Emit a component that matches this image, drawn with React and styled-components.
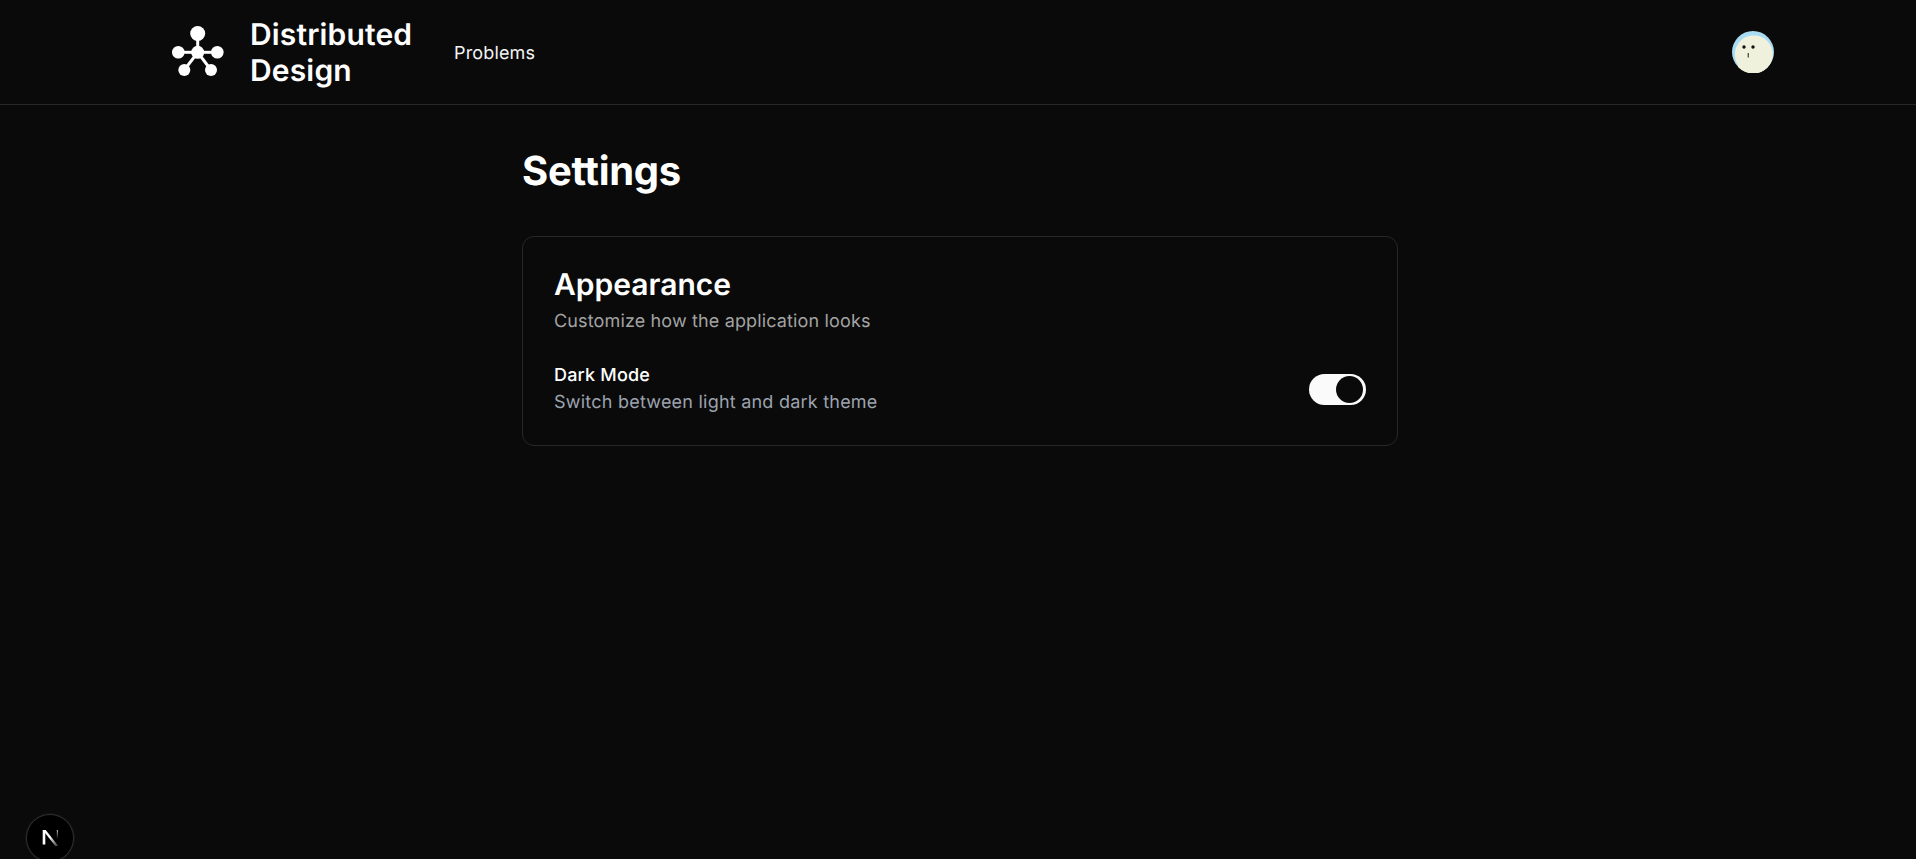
import React from "react";
import styled, { createGlobalStyle } from "styled-components";

const Global = createGlobalStyle`
  html, body { margin: 0; padding: 0; background: #0a0a0a; }
  body { font-family: Inter, "Liberation Sans", sans-serif; text-rendering: geometricPrecision; -webkit-font-smoothing: antialiased; color: #fff; min-height: 859px; overflow: hidden; }
`;
const Page = styled.div`position: relative; height: 859px; background: #0a0a0a;`;
const Header = styled.header`
  height: 104px; border-bottom: 1px solid #27272a; display: flex; align-items: center;
  justify-content: space-between; padding: 0 142px 0 172px;
`;
const Left = styled.div`display: flex; align-items: center;`;
const Brand = styled.a`display: flex; align-items: center; gap: 26px; color: #fff;`;
const BrandName = styled.span`padding-top: 1px; font-size: 30px; line-height: 36px; font-weight: 600; letter-spacing: 0.16px; width: 170px;`;
const NavLink = styled.a`margin-left: 34px; padding-top: 4px; font-size: 18px; line-height: 28px; letter-spacing: 0.15px; color: #f4f4f5;`;
const Main = styled.main`width: 876px; margin-left: 522px; padding-top: 42px;`;
const Title = styled.h1`margin: 0 0 41px; font-size: 40px; line-height: 48px; font-weight: 700; letter-spacing: -0.3px;`;
const Card = styled.section`
  border: 1px solid #27272a; border-radius: 12px; padding: 30px 31px 29px; display: flex; flex-direction: column;
`;
const CardTitle = styled.h2`margin: 0; font-size: 30px; line-height: 36px; font-weight: 600;`;
const CardSub = styled.p`margin: 7px 0 0; font-size: 18px; line-height: 24px; letter-spacing: 0.14px; color: #a3a3a3;`;
const Row = styled.div`display: flex; align-items: center; justify-content: space-between; margin-top: 28px;`;
const RowLabel = styled.div`font-size: 18px; line-height: 28px; font-weight: 500; letter-spacing: 0.2px;`;
const RowSub = styled.div`font-size: 18px; line-height: 26px; letter-spacing: 0.225px; color: #9ca3af;`;
const Switch = styled.button`
  width: 57px; height: 31px; border: 0; border-radius: 16px; background: #fafafa; padding: 2px 3px 2px 2px; display: flex;
  justify-content: flex-end; align-items: center;
`;
const Thumb = styled.span`width: 27px; height: 27px; border-radius: 50%; background: #0a0a0a; display: block;`;
const DevBadge = styled.div`
  position: absolute; left: 26px; bottom: -3px; width: 46px; height: 46px; border-radius: 50%; background: #000;
  border: 1px solid #2e2e2e; box-shadow: 0 0 0 1px #151515; display: flex; align-items: center; justify-content: center;
`;

const Logo = () => (
  <svg width="52" height="52" viewBox="0 0 52 52" fill="#fff" stroke="#fff" aria-hidden="true">
    <g strokeWidth="3">
      <line x1="25.7" y1="26.3" x2="25.7" y2="7.5" /><line x1="25.7" y1="26.3" x2="6.3" y2="26.3" />
      <line x1="25.7" y1="26.3" x2="45.3" y2="26.3" /><line x1="25.7" y1="26.3" x2="12.3" y2="44" />
      <line x1="25.7" y1="26.3" x2="39" y2="44" />
    </g>
    <g stroke="none">
      <circle cx="25.7" cy="7.5" r="7.5" /><circle cx="6.3" cy="26.3" r="6.3" /><circle cx="45.3" cy="26.3" r="6.3" />
      <circle cx="12.3" cy="44" r="6" /><circle cx="39" cy="44" r="6" /><circle cx="25.7" cy="26.3" r="6.5" />
    </g>
  </svg>
);
const Avatar = () => (
  <svg width="42" height="42" viewBox="0 0 42 42" aria-hidden="true">
    <circle cx="21" cy="21" r="21" fill="#a9dcf2" />
    <circle cx="21.8" cy="23.4" r="19" fill="#f0f1dc" />
    <path d="M6 36A21 21 0 0 0 36 36L36 30L6 30Z" fill="#f0f1dc" />
    <circle cx="12" cy="16" r="1.7" fill="#111" /><circle cx="21" cy="16" r="1.7" fill="#111" />
    <rect x="15.6" y="22" width="1.4" height="4.5" fill="#555" />
  </svg>
);
const NextMark = () => (
  <svg width="22" height="22" viewBox="0 0 22 22" aria-hidden="true">
    <defs>
      <linearGradient id="nf" x1="0" y1="0" x2="1" y2="1"><stop offset="0.45" stopColor="#fff" /><stop offset="1" stopColor="#fff" stopOpacity="0.2" /></linearGradient>
      <linearGradient id="ns" x1="0" y1="0" x2="0" y2="1"><stop offset="0" stopColor="#fff" stopOpacity="0.7" /><stop offset="1" stopColor="#fff" stopOpacity="0" /></linearGradient>
    </defs>
    <rect x="3.7" y="3" width="2.6" height="14.5" fill="#fff" />
    <path d="M3.7 3h3l12.6 16h-3z" fill="url(#nf)" />
    <rect x="17.8" y="3" width="1.2" height="9" fill="url(#ns)" />
  </svg>
);

export default function App() {
  return (
    <Page>
      <Global />
      <Header>
        <Left>
          <Brand><Logo /><BrandName>Distributed Design</BrandName></Brand>
          <NavLink>Problems</NavLink>
        </Left>
        <Avatar />
      </Header>
      <Main>
        <Title>Settings</Title>
        <Card>
          <CardTitle>Appearance</CardTitle>
          <CardSub>Customize how the application looks</CardSub>
          <Row>
            <div>
              <RowLabel>Dark Mode</RowLabel>
              <RowSub>Switch between light and dark theme</RowSub>
            </div>
            <Switch aria-label="Dark Mode"><Thumb /></Switch>
          </Row>
        </Card>
      </Main>
      <DevBadge><NextMark /></DevBadge>
    </Page>
  );
}
